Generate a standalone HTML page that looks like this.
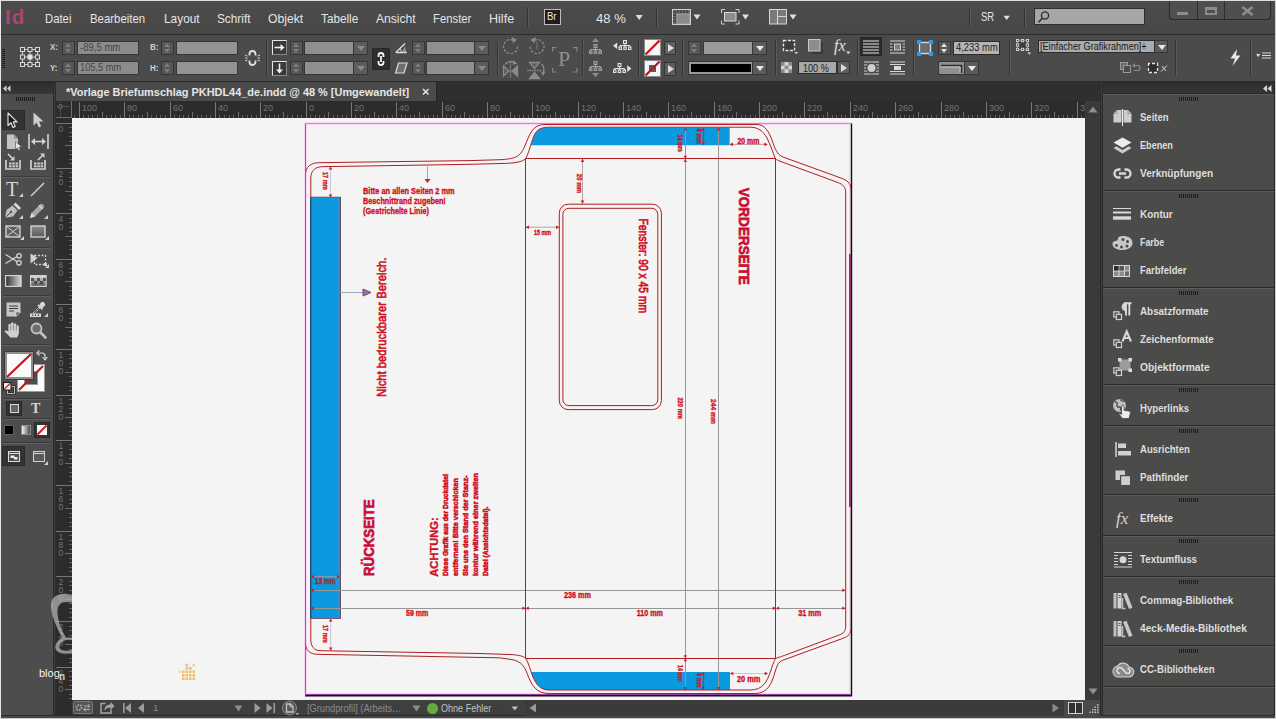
<!DOCTYPE html>
<html lang="de">
<head>
<meta charset="utf-8">
<title>Vorlage Briefumschlag PKHDL44_de.indd @ 48 % [Umgewandelt]</title>
<style>
html,body{margin:0;padding:0;background:#494949;}
body{width:1276px;height:719px;position:relative;overflow:hidden;background:#494949;font-family:"Liberation Sans",sans-serif;color:#ddd;}
.abs,.abs *{position:absolute;}
div{box-sizing:border-box;}
svg{position:absolute;overflow:visible;}
.t{position:absolute;white-space:nowrap;transform-origin:0 0;line-height:1;}
/* window frame */
#frameL{left:0;top:0;width:1px;height:719px;background:#e6e6e6;}
#frameT{left:0;top:0;width:1276px;height:1px;background:#dedede;}
#frameR{left:1275px;top:0;width:1px;height:719px;background:#cfcfcf;}
#frameB{left:0;top:718px;width:1276px;height:1px;background:#c8c8c8;}
/* menubar */
#menubar{left:1px;top:1px;width:1274px;height:33px;background:linear-gradient(#4c4c4c,#474747);}
#menuline{left:1px;top:34px;width:1274px;height:1px;background:#2c2c2c;}
.menu{position:absolute;top:10.5px;font-size:13px;color:#e4e4e4;white-space:nowrap;transform-origin:0 0;line-height:16px;}
.vsep{position:absolute;width:1px;background:#333;box-shadow:1px 0 0 #5a5a5a;}
/* control */
#control{left:1px;top:35px;width:1274px;height:46px;background:#4b4b4b;}
#controlline{left:1px;top:81px;width:1274px;height:1px;background:#2a2a2a;}
.fld{position:absolute;height:14px;background:#8e8e8e;border:1px solid #3a3a3a;border-radius:1px;}
.spin{position:absolute;width:13px;height:14px;background:#5a5a5a;border:1px solid #383838;}
.lbl{position:absolute;font-size:10px;color:#d8d8d8;font-weight:bold;line-height:10px;}
/* tools */
#toolsHead{left:1px;top:82px;width:52px;height:12px;background:linear-gradient(#2b2b2b,#383838);}
#tools{left:1px;top:94px;width:52px;height:622px;background:#4d4d4d;}
#toolsGap{left:53px;top:82px;width:3px;height:634px;background:#2b2b2b;}
.tsep{position:absolute;left:3px;width:47px;height:1px;background:#3a3a3a;box-shadow:0 1px 0 #606060;}
/* doc */
#tabbar{left:56px;top:82px;width:1044px;height:19px;background:#2f2f2f;}
#tab{left:56px;top:82px;width:381px;height:19px;background:#4b4b4b;border-right:1px solid #262626;}
#hruler{left:56px;top:101px;width:1029px;height:17px;background:#2c2c2c;}
#vruler{left:56px;top:118px;width:16px;height:582px;background:#2c2c2c;}
#canvas{left:72px;top:118px;width:1013px;height:582px;background:#f4f4f4;overflow:hidden;}
#vscroll{left:1085px;top:101px;width:15px;height:599px;background:#3a3a39;}
#status{left:56px;top:700px;width:1044px;height:16px;background:#3f3f3f;}
#docGap{left:1100px;top:82px;width:3px;height:634px;background:#2b2b2b;}
/* right panels */
#panHead{left:1103px;top:82px;width:171px;height:12px;background:linear-gradient(#2b2b2b,#383838);}
#panels{left:1103px;top:94px;width:171px;height:622px;background:#4b4b4a;}
#panR{left:1274px;top:82px;width:1px;height:634px;background:#262626;}
#botline{left:1px;top:715px;width:1274px;height:1px;background:#2a2a2a;}
#botfill{left:1px;top:716px;width:1274px;height:2px;background:#484848;}
.grp{position:absolute;left:0;width:171px;border-top:1px solid #2a2a2a;box-shadow:inset 0 1px 0 #5c5c5c;}
.grip{position:absolute;left:76px;top:4px;width:20px;height:4px;background:repeating-linear-gradient(90deg,#1c1c1c 0 1px,transparent 1px 2px);}
.prow{position:absolute;left:37px;font-size:10.5px;font-weight:bold;color:#dedede;white-space:nowrap;transform-origin:0 50%;line-height:12px;}
#ctl .f{height:14px;background:#8c8c8c;border:1px solid #353535;}
#ctl .fa{height:14px;background:#b4b4b4;border:1px solid #2c2c2c;}
#ctl .sp{width:13px;height:14px;background:#565656;border:1px solid #353535;}
#ctl .sp:before{content:"";position:absolute;left:2px;top:1px;border:3.5px solid transparent;border-top:none;border-bottom:4px solid #7d7d7d;}
#ctl .sp:after{content:"";position:absolute;left:2px;top:7px;border:3.5px solid transparent;border-bottom:none;border-top:4px solid #7d7d7d;}
#ctl .spa:before{border-bottom-color:#e0e0e0;}
#ctl .spa:after{border-top-color:#e0e0e0;}
#ctl .dd{width:14px;height:14px;background:#5c5c5c;border:1px solid #353535;border-left:none;}
#ctl .dd:after{content:"";position:absolute;left:2.5px;top:4px;border:4px solid transparent;border-bottom:none;border-top:5px solid #8a8a8a;}
#ctl .dda:after{border-top-color:#e8e8e8;}
#ctl .pb{width:12px;height:14px;background:#5e5e5e;border:1px solid #353535;}
#ctl .pb:after{content:"";position:absolute;left:3px;top:2px;border:4px solid transparent;border-right:none;border-left:6px solid #dcdcdc;}
#ctl .l{font-size:9.5px;font-weight:bold;color:#cfcfcf;line-height:11px;transform:scaleX(.84);transform-origin:0 0;}
#ctl .v{font-size:10.5px;line-height:12px;color:#3c3c3c;white-space:nowrap;transform-origin:0 0;}
#ctl .vs{width:1px;top:5px;height:36px;background:#353535;box-shadow:1px 0 0 #595959;}
</style>
</head>
<body>
<div class="abs" id="frames" style="left:0;top:0;width:1276px;height:719px;">
<div id="menubar"></div><div id="menuline"></div>
<div id="control"></div><div id="controlline"></div>
<div id="toolsHead"></div><div id="tools"></div><div id="toolsGap"></div>
<div id="tabbar"></div><div id="tab"></div>
<div id="hruler"></div><div id="vruler"></div>
<div id="canvas"></div><div id="vscroll"></div><div id="status"></div><div id="docGap"></div>
<div id="gapL" style="left:54px;top:82px;width:1px;height:634px;background:#3e3e3e;"></div><div id="gapR" style="left:1101px;top:82px;width:1px;height:634px;background:#3c3c3c;"></div>
<div id="panHead"></div><div id="panels"></div><div id="panR"></div>
<div id="botline"></div><div id="botfill"></div>
<div id="frameL"></div><div id="frameT"></div><div id="frameR"></div><div id="frameB"></div>
</div>
<div class="abs" id="menuitems" style="left:0;top:0;width:1276px;height:35px;">
<span class="t" id="idlogo" style="transform:scaleX(0.9762);left:5px;top:5.500px;font-size:21px;font-weight:bold;color:#ac4570;letter-spacing:1px;line-height:22px;">Id</span>
<span class="menu" id="m1" style="transform:scaleX(0.8700);left:44.6px;">Datei</span>
<span class="menu" id="m2" style="transform:scaleX(0.8762);left:89.5px;">Bearbeiten</span>
<span class="menu" id="m3" style="transform:scaleX(0.9128);left:164.3px;">Layout</span>
<span class="menu" id="m4" style="transform:scaleX(0.9081);left:217.2px;">Schrift</span>
<span class="menu" id="m5" style="transform:scaleX(0.9368);left:267.8px;">Objekt</span>
<span class="menu" id="m6" style="transform:scaleX(0.9049);left:321.3px;">Tabelle</span>
<span class="menu" id="m7" style="transform:scaleX(0.9302);left:376px;">Ansicht</span>
<span class="menu" id="m8" style="transform:scaleX(0.8705);left:433px;">Fenster</span>
<span class="menu" id="m9" style="transform:scaleX(0.9654);left:489.3px;">Hilfe</span>
<div class="vsep" style="left:527px;top:7px;height:20px;"></div>
<div style="left:544px;top:9px;width:17px;height:16px;background:#1e1e1e;border:1px solid #bdbdbd;"></div>
<span class="t" id="br" style="transform:scaleX(0.9500);left:547px;top:12px;font-size:10px;color:#e8e8e8;line-height:10px;">Br</span>
<span class="menu" id="zoomv" style="transform:scaleX(0.9710);left:595.8px;font-size:13.5px;">48 %</span>
<svg style="left:635px;top:14px;" width="9" height="7"><path d="M0.7 1h7l-3.5 5z" fill="#e0e0e0"/></svg>
<div class="vsep" style="left:656px;top:7px;height:20px;"></div>
<!-- view options icon -->
<svg style="left:672px;top:9px;" width="30" height="17">
 <rect x="0.5" y="0.5" width="18" height="15" fill="#6a6a6a" stroke="#d0d0d0"/>
 <rect x="5" y="5" width="13" height="10" fill="#8a8a8a" stroke="#bdbdbd" stroke-width=".6"/>
 <path d="M1 3h3M1 6h3M1 9h3M1 12h3M6 1v3M9 1v3M12 1v3M15 1v3" stroke="#2b2b2b" stroke-width="1"/>
 <path d="M21.5 5.5h7l-3.5 5z" fill="#e0e0e0"/>
</svg>
<!-- screen mode icon -->
<svg style="left:721px;top:9px;" width="30" height="17">
 <path d="M0.5 4V0.5H4M14.5 0.5H18V4M18 11.5V15H14.5M4 15H0.5V11.5" fill="none" stroke="#d0d0d0"/>
 <rect x="3.5" y="3.5" width="11.5" height="8.5" fill="#8d8d8d" stroke="#d6d6d6"/>
 <path d="M21 5.5h7l-3.5 5z" fill="#e0e0e0"/>
</svg>
<!-- arrange icon -->
<svg style="left:769px;top:9px;" width="30" height="17">
 <rect x="0.5" y="0.5" width="17" height="14.5" fill="#7a7a7a" stroke="#d6d6d6"/>
 <path d="M8.5 0.5V15M8.5 7.5H17.5" stroke="#d6d6d6" fill="none"/>
 <path d="M20.5 5.5h7l-3.5 5z" fill="#e0e0e0"/>
</svg>
<div class="vsep" style="left:969px;top:7px;height:20px;"></div>
<span class="menu" id="sr" style="transform:scaleX(0.7222);left:981px;top:8.500px;font-size:13px;">SR</span>
<svg style="left:1003px;top:15px;" width="8" height="6"><path d="M0.5 0.8h6.4l-3.2 4.2z" fill="#e0e0e0"/></svg>
<div class="vsep" style="left:1024px;top:7px;height:20px;"></div>
<div id="search" style="left:1034px;top:8px;width:111px;height:17px;background:#a6a6a6;border:1px solid #2e2e2e;"></div>
<svg style="left:1037px;top:10px;" width="14" height="14"><circle cx="8" cy="5.5" r="3.6" fill="none" stroke="#2a2a2a" stroke-width="1.3"/><path d="M5.4 8.2L1.5 12.3" stroke="#2a2a2a" stroke-width="1.6"/></svg>
<!-- window buttons -->
<div id="winbtns" style="left:1169px;top:1px;width:102px;height:19px;background:#4f4f4f;border:1px solid #2a2a2a;border-top:none;border-radius:0 0 4px 4px;"></div>
<div style="left:1197px;top:1px;width:1px;height:18px;background:#2e2e2e;"></div>
<div style="left:1224px;top:1px;width:1px;height:18px;background:#2e2e2e;"></div>
<div style="left:1177px;top:12px;width:11px;height:3px;background:#8c8c8c;"></div>
<div style="left:1205px;top:7px;width:12px;height:8px;border:2px solid #8c8c8c;border-top-width:3px;"></div>
<svg style="left:1241px;top:6px;" width="13" height="10"><path d="M1.5 1L11.5 9M11.5 1L1.5 9" stroke="#8c8c8c" stroke-width="2.6"/></svg>
</div>
<div class="abs" id="ctl" style="left:0;top:35px;width:1276px;height:46px;">

<!-- gripper -->
<div style="left:2px;top:13px;width:3px;height:20px;background:repeating-linear-gradient(0deg,#1c1c1c 0 1px,transparent 1px 2px);"></div>
<!-- reference point -->
<svg style="left:20px;top:12px;" width="20" height="20" id="refpt">
 <path d="M2.5 2.5h15v15h-15zM2.5 10h15M10 2.5v15" fill="none" stroke="#cfcfcf" stroke-width="1"/>
 <g fill="#4b4b4b" stroke="#dadada" stroke-width="1">
 <rect x="0.5" y="0.5" width="4" height="4"/><rect x="8" y="0.5" width="4" height="4"/><rect x="15.5" y="0.5" width="4" height="4"/>
 <rect x="0.5" y="8" width="4" height="4"/><rect x="15.5" y="8" width="4" height="4"/>
 <rect x="0.5" y="15.5" width="4" height="4"/><rect x="8" y="15.5" width="4" height="4"/><rect x="15.5" y="15.5" width="4" height="4"/>
 </g>
 <rect x="7.5" y="7.5" width="5" height="5" fill="#e4e4e4"/>
</svg>
<span class="l" style="left:50px;top:6px;">X:</span>
<span class="l" style="left:50px;top:27px;">Y:</span>
<div class="sp" style="left:62px;top:6px;"></div><div class="sp" style="left:62px;top:26px;"></div>
<div class="f" style="left:77px;top:6px;width:62px;"></div><div class="f" style="left:77px;top:26px;width:62px;"></div>
<span class="v" id="vx" style="transform:scaleX(0.9091);left:80px;top:5.500px;color:#454545;">-89,5 mm</span>
<span class="v" id="vy" style="transform:scaleX(0.8851);left:80px;top:25.500px;color:#454545;">105,5 mm</span>
<span class="l" style="left:150px;top:6px;">B:</span>
<span class="l" style="left:150px;top:27px;">H:</span>
<div class="sp" style="left:161px;top:6px;"></div><div class="sp" style="left:161px;top:26px;"></div>
<div class="f" style="left:176px;top:6px;width:62px;background:#939393;"></div><div class="f" style="left:176px;top:26px;width:62px;background:#939393;"></div>
<!-- constrain chain (broken) -->
<svg style="left:244px;top:14px;" width="17" height="18" id="chain1">
 <path d="M5.5 6.5V5a3 3 0 0 1 6 0v1.5M5.5 11.5V13a3 3 0 0 0 6 0v-1.5" fill="none" stroke="#e2e2e2" stroke-width="1.8"/>
 <path d="M1 6l2.5 1M1 9h2.5M1 12l2.5-1M16 6l-2.5 1M16 9h-2.5M16 12l-2.5-1" stroke="#d0d0d0" stroke-width="1"/>
</svg>
<div class="vs" style="left:266px;"></div>
<!-- X/Y scale icons -->
<svg style="left:272px;top:5px;" width="15" height="15"><rect x="0.5" y="0.5" width="14" height="14" fill="#3a3a3a" stroke="#cfcfcf" stroke-dasharray="1 1"/><path d="M0.5 0.5h14M0.5 0.5v14" stroke="#e6e6e6" fill="none"/><path d="M2.5 7.5h8" stroke="#f0f0f0" stroke-width="1.6"/><path d="M8.5 4l4 3.5-4 3.5z" fill="#f0f0f0"/></svg>
<svg style="left:272px;top:26px;" width="15" height="15"><rect x="0.5" y="0.5" width="14" height="14" fill="#3a3a3a" stroke="#cfcfcf" stroke-dasharray="1 1"/><path d="M0.5 0.5h14M0.5 0.5v14" stroke="#e6e6e6" fill="none"/><path d="M7.5 2.5v8" stroke="#f0f0f0" stroke-width="1.6"/><path d="M4 8.5l3.5 4 3.5-4z" fill="#f0f0f0"/></svg>
<div class="sp" style="left:290px;top:6px;"></div><div class="sp" style="left:290px;top:26px;"></div>
<div class="f" style="left:304px;top:6px;width:50px;background:#8f8f8f;"></div><div class="dd" style="left:354px;top:6px;"></div>
<div class="f" style="left:304px;top:26px;width:50px;background:#8f8f8f;"></div><div class="dd" style="left:354px;top:26px;"></div>
<!-- chain button -->
<div style="left:372px;top:13px;width:18px;height:22px;background:#2d2d2d;border:1px solid #262626;border-radius:1px;"></div>
<svg style="left:375px;top:16px;" width="12" height="16"><path d="M3.5 6V4.5a2.5 2.5 0 0 1 5 0V6M3.5 10v1.5a2.5 2.5 0 0 0 5 0V10M6 5v6" fill="none" stroke="#f2f2f2" stroke-width="1.8"/></svg>
<!-- rotate / shear icons -->
<svg style="left:395px;top:7px;" width="13" height="12"><path d="M0.8 10.5h11M0.8 10.5L10 1.5" fill="none" stroke="#dcdcdc" stroke-width="1.3"/><path d="M6.5 10.5a6 6 0 0 0-1.8-4" fill="none" stroke="#dcdcdc" stroke-width="1"/><path d="M7 10.5L9.8 4l1.6 6.5z" fill="#cfcfcf" opacity=".55"/></svg>
<svg style="left:395px;top:27px;" width="13" height="12"><path d="M3.5 1h8.5L9 11H0.6z" fill="#6e6e6e" stroke="#dcdcdc" stroke-width="1.2"/></svg>
<div class="sp" style="left:412px;top:6px;"></div><div class="sp" style="left:412px;top:26px;"></div>
<div class="f" style="left:426px;top:6px;width:49px;background:#8f8f8f;"></div><div class="dd" style="left:475px;top:6px;"></div>
<div class="f" style="left:426px;top:26px;width:49px;background:#8f8f8f;"></div><div class="dd" style="left:475px;top:26px;"></div>
<div class="vs" style="left:497px;"></div>
<!-- rotate cw/ccw, flip icons (dimmed) -->
<svg style="left:502px;top:1px;" width="46" height="44" id="roticons" fill="none" stroke="#8a8a8a" stroke-width="1.300"><path d="M15.500 10.500a7 7 0 1 1-3.500-6" stroke-dasharray="2.600 1.500"/><path d="M9.500 1l5.500 2.800-4 3.400z" fill="#8a8a8a" stroke="none"/><path d="M28 10.500a7 7 0 1 0 3.500-6" stroke-dasharray="2.600 1.500"/><path d="M34 1l-5.500 2.800 4 3.400z" fill="#8a8a8a" stroke="none"/><path d="M35 5.500v8" stroke-width="1" stroke="#767676"/><path d="M8.500 26v16" stroke-dasharray="1.200 1.200" stroke="#a0a0a0"/><path d="M1.500 30v10l5.500-5z" fill="#5e5e5e"/><path d="M15.500 30v10l-5.500-5z" fill="#8a8a8a"/><path d="M3 28.500a7.500 7.500 0 0 1 10.500-1.500"/><path d="M11.500 24.500l4 3.200-4.800 1z" fill="#8a8a8a" stroke="none"/><path d="M25.500 34.500h14" stroke-dasharray="1.200 1.200" stroke="#a0a0a0"/><path d="M27.500 26.500h10l-5 6z" fill="#5e5e5e"/><path d="M27.500 42.500h10l-5-6z" fill="#8a8a8a"/><path d="M39.500 28a8 8 0 0 1 1.500 9"/><path d="M43.500 35.500l-2.500 4.500-2-4.200z" fill="#8a8a8a" stroke="none"/></svg>
<svg style="left:552px;top:12px;" width="26" height="26" fill="none" stroke="#868686" stroke-width="1.200"><path d="M0.600 4.500V0.600H4.500M21 0.600H25V4.500M25 21V25H21M4.500 25H0.600V21"/></svg>
<span class="t" id="bigP" style="left:558px;top:11.500px;font-family:'Liberation Serif',serif;font-size:22px;color:#8e8e8e;line-height:24px;">P</span>
<div class="vs" style="left:582px;"></div>
<!-- select container/content icons -->
<svg style="left:588px;top:0px;" width="46" height="46" id="hier" stroke-width="1"><g stroke="#a2a2a2" fill="#6a6a6a"><g transform="translate(1 9)"><path d="M6.500 3.500v2M1.500 7V5.500h10V7M6.500 5.500V7" fill="none"/><rect x="5" y="0.500" width="3" height="3"/><rect x="0.500" y="7" width="2.500" height="2.500"/><rect x="5.250" y="7" width="2.500" height="2.500"/><rect x="10" y="7" width="2.500" height="2.500"/></g><g transform="translate(1 26)"><path d="M6.500 3.500v2M1.500 7V5.500h10V7M6.500 5.500V7" fill="none"/><rect x="5" y="0.500" width="3" height="3"/><rect x="0.500" y="7" width="2.500" height="2.500"/><rect x="5.250" y="7" width="2.500" height="2.500"/><rect x="10" y="7" width="2.500" height="2.500"/></g></g><path d="M4 7h7l-3.500-4zM4 38h7l-3.500 4z" fill="#8e8e8e"/><g stroke="#e2e2e2" fill="#6a6a6a"><g transform="translate(30.500 5)"><path d="M6.500 3.500v2M1.500 7V5.500h10V7M6.500 5.500V7" fill="none"/><rect x="5" y="0.500" width="3" height="3"/><rect x="0.500" y="7" width="2.500" height="2.500"/><rect x="5.250" y="7" width="2.500" height="2.500"/><rect x="10" y="7" width="2.500" height="2.500"/></g><g transform="translate(25 28)"><path d="M6.500 3.500v2M1.500 7V5.500h10V7M6.500 5.500V7" fill="none"/><rect x="5" y="0.500" width="3" height="3"/><rect x="0.500" y="7" width="2.500" height="2.500"/><rect x="5.250" y="7" width="2.500" height="2.500"/><rect x="10" y="7" width="2.500" height="2.500"/></g></g><path d="M29.200 7.500v6.500l-4.200-3.250zM39.200 30.200v6.700l4.200-3.350z" fill="#e2e2e2"/></svg>
<div class="vs" style="left:638px;"></div>
<!-- fill / stroke -->
<div style="left:644px;top:4px;width:17px;height:17px;background:#f6f6f6;border:1px solid #8a8a8a;"></div>
<svg style="left:644px;top:4px;" width="17" height="17"><path d="M1.5 15.500L15.500 1.500" stroke="#c8141a" stroke-width="2.300"/></svg>
<div class="pb" style="left:664px;top:6px;"></div>
<div style="left:644px;top:25px;width:17px;height:17px;background:#f6f6f6;border:1px solid #8a8a8a;"></div>
<div style="left:649px;top:30px;width:7px;height:7px;background:#5a5a5a;"></div>
<svg style="left:644px;top:25px;" width="17" height="17"><path d="M1.500 15.500L15.500 1.500" stroke="#c8141a" stroke-width="2.300"/></svg>
<div class="pb" style="left:664px;top:27px;"></div>
<div class="vs" style="left:682px;"></div>
<div class="sp" style="left:688px;top:6px;"></div>
<div class="f" style="left:703px;top:6px;width:50px;background:#9a9a9a;"></div><div class="dd dda" style="left:753px;top:6px;"></div>
<div class="f" style="left:688px;top:26px;width:65px;background:#9a9a9a;"></div><div style="left:691px;top:29px;width:60px;height:8px;background:#000;"></div><div class="dd dda" style="left:753px;top:26px;"></div>
<div class="vs" style="left:775px;"></div>
<!-- frame fitting icons -->
<svg style="left:782px;top:4px;" width="16" height="16"><rect x="1.500" y="1.500" width="11" height="10" fill="#3c3c3c" stroke="#e0e0e0" stroke-width="1.400" stroke-dasharray="3 1.500"/><path d="M12.500 13h3.500l-1.750 2.200z" fill="#d8d8d8"/></svg>
<svg style="left:808px;top:4px;" width="16" height="16"><rect x="3" y="3" width="12" height="12" fill="#3a3a3a"/><rect x="0.500" y="0.500" width="11.500" height="11.500" fill="#8c8c8c" stroke="#c8c8c8"/></svg>
<span class="t" id="fx1" style="left:834px;top:3px;font-family:'Liberation Serif',serif;font-style:italic;font-size:16px;color:#e2e2e2;line-height:16px;">fx</span>
<svg style="left:846px;top:16px;" width="5" height="4"><path d="M0 0.500h4.500l-2.250 2.800z" fill="#d8d8d8"/></svg>
<!-- opacity -->
<svg style="left:781px;top:27px;" width="11" height="11"><rect width="11" height="11" fill="#d6d6d6"/><path d="M0 0h3.670v3.670H0zM7.330 0H11v3.670H7.330zM3.670 3.670h3.660v3.660H3.670zM0 7.330h3.670V11H0zM7.330 7.330H11V11H7.330z" fill="#8a8a8a"/></svg>
<div class="fa" style="left:798px;top:26px;width:39px;height:13px;background:#a8a8a8;"></div>
<span class="v" id="op" style="transform:scaleX(0.8667);left:803px;top:27px;color:#222;">100 %</span>
<div class="pb" style="left:837px;top:26px;height:13px;width:13px;"></div>
<div class="vs" style="left:857px;"></div>
<!-- text wrap buttons -->
<div style="left:860px;top:2px;width:22px;height:19px;background:#2e2e2e;border:1px solid #262626;"></div>
<svg style="left:863px;top:5px;" width="16" height="14"><path d="M0 1h16M0 4h16M0 7h16M0 10h16M0 13h16" stroke="#e4e4e4" stroke-width="1.200"/></svg>
<svg style="left:890px;top:5px;" width="15" height="14"><path d="M0 1h15M0 4h15M0 7h15M0 10h15M0 13h15" stroke="#d8d8d8" stroke-width="1.100"/><rect x="2.500" y="2.500" width="10" height="9" fill="#4b4b4b"/><rect x="4.500" y="4" width="6" height="6" fill="#7e7e7e" stroke="#d8d8d8" stroke-width=".9"/></svg>
<svg style="left:864px;top:26px;" width="15" height="14"><path d="M0 1h15M0 4h15M0 7h15M0 10h15M0 13h15" stroke="#d8d8d8" stroke-width="1.100"/><circle cx="7.500" cy="7" r="5.500" fill="#4b4b4b"/><circle cx="7.500" cy="7" r="4" fill="#cfcfcf"/></svg>
<svg style="left:890px;top:26px;" width="15" height="14"><path d="M0 1h15M0 3.500h15M0 10.500h15M0 13h15" stroke="#d8d8d8" stroke-width="1.100"/><rect x="4" y="5" width="7" height="4" fill="#d8d8d8"/></svg>
<div class="vs" style="left:913px;"></div>
<!-- corner options -->
<svg style="left:917px;top:5px;" width="16" height="16"><rect x="2.500" y="2.500" width="11" height="11" fill="#6a6a6a" stroke="#d8d8d8" stroke-width="1.400"/><g fill="#2f9be8"><rect x="0" y="0" width="4" height="4"/><rect x="12" y="0" width="4" height="4"/><rect x="0" y="12" width="4" height="4"/><rect x="12" y="12" width="4" height="4"/></g></svg>
<div class="sp spa" style="left:938px;top:6px;"></div>
<div class="fa" style="left:953px;top:6px;width:47px;"></div>
<span class="v" id="cr" style="transform:scaleX(0.8936);left:956px;top:6px;color:#1e1e1e;">4,233 mm</span>
<div class="f" style="left:938px;top:26px;width:27px;background:#8f8f8f;"></div>
<svg style="left:940px;top:28px;" width="23" height="10"><path d="M1 2.500h20.500V10" fill="none" stroke="#2c2c2c" stroke-width="1.600"/><path d="M1 4h19v6" fill="none" stroke="#c9c9c9" stroke-width="1"/></svg>
<div class="dd dda" style="left:965px;top:26px;"></div>
<div class="vs" style="left:1009px;"></div>
<!-- object style -->
<svg style="left:1016px;top:4px;" width="16" height="16"><rect x="1.500" y="1.500" width="10" height="9" fill="#3c3c3c" stroke="#bdbdbd" stroke-width="1" stroke-dasharray="1 1"/><g fill="#4b4b4b" stroke="#e0e0e0" stroke-width=".8"><rect x="0.400" y="0.400" width="2.400" height="2.400"/><rect x="5.300" y="0.400" width="2.400" height="2.400"/><rect x="10.200" y="0.400" width="2.400" height="2.400"/><rect x="0.400" y="4.800" width="2.400" height="2.400"/><rect x="10.200" y="4.800" width="2.400" height="2.400"/><rect x="0.400" y="9.200" width="2.400" height="2.400"/><rect x="5.300" y="9.200" width="2.400" height="2.400"/><rect x="10.200" y="9.200" width="2.400" height="2.400"/></g><path d="M11.500 13.500H15l-1.750 2.200z" fill="#d8d8d8"/></svg>
<div class="fa" style="left:1038px;top:5px;width:117px;height:13px;background:#ababab;"></div>
<span class="v" id="os" style="transform:scaleX(0.7926);left:1040px;top:4.500px;color:#1a1a1a;font-size:11.500px;">[Einfacher Grafikrahmen]+</span>
<div class="dd dda" style="left:1155px;top:5px;height:13px;width:13px;"></div>
<svg style="left:1120px;top:27px;" width="48" height="13" fill="none">
 <rect x="0.500" y="0.500" width="7" height="7" fill="#6a6a6a" stroke="#9a9a9a"/><rect x="3.500" y="3.500" width="7" height="7" fill="#4b4b4b" stroke="#9a9a9a"/>
 <path d="M13.500 8.500h4a2.500 2.500 0 0 0 0-5h-4.500" stroke="#8a8a8a" stroke-width="1.200"/><path d="M15 1l-3 2.500 3 2.500z" fill="#8a8a8a"/>
 <rect x="28.500" y="1.500" width="9" height="9" fill="#2c2c2c" stroke="#e6e6e6" stroke-width="1.300" stroke-dasharray="3 2" stroke-dashoffset="1.500"/>
 <path d="M41 9.500l6-6M42 4l4 5" stroke="#d8d8d8" stroke-width="1"/>
</svg>
<div class="vs" style="left:1175px;"></div>
<svg style="left:1229px;top:14px;" width="13" height="18"><path d="M8 0L1.500 9.500h4.500L3.500 17 11.500 6.500H7z" fill="#e8e8e8"/></svg>
<div class="vs" style="left:1250px;"></div>
<svg style="left:1256px;top:17px;" width="15" height="8"><path d="M0 2h4.500L2.250 5z" fill="#dcdcdc"/><path d="M6 1h9M6 3.500h9M6 6h9" stroke="#dcdcdc" stroke-width="1.100"/></svg>
</div>
<div class="abs" id="tl" style="left:0;top:82px;width:56px;height:634px;">
<svg style="left:2.500px;top:3px;" width="8" height="7"><path d="M3.500 0.300v6.400L0 3.500zM7.500 0.300v6.400L4 3.500z" fill="#cdcdcd"/></svg>
<div style="left:16px;top:15px;width:20px;height:4px;background:repeating-linear-gradient(90deg,#1c1c1c 0 1px,transparent 1px 2px);"></div>
<!-- selected selection tool -->
<div style="left:2px;top:28px;width:23px;height:20px;background:#333;border:1px solid #2a2a2a;"></div>
<svg style="left:7px;top:30px;" width="12" height="17"><path d="M1 1v12.500l3-2.800 2 4.800 2.200-1-2-4.600H10z" fill="#1a1a1a" stroke="#e8e8e8" stroke-width="1.100" stroke-linejoin="round"/></svg>
<svg style="left:33px;top:30px;" width="12" height="17"><path d="M0.500 0.500v13l3.200-3 2.100 5 2.300-1-2.100-4.900H10.500z" fill="#cfcfcf"/></svg>
<!-- page tool -->
<svg style="left:6px;top:52px;" width="16" height="16"><path d="M1 0.500h7l4 4V15H1z" fill="#c4c4c4"/><path d="M8 0.500v4h4z" fill="#8c8c8c"/><path d="M9.500 7.500v8l2-1.800 1.300 3 1.500-.7-1.300-2.900h2.800z" fill="#e8e8e8" stroke="#4d4d4d" stroke-width=".6"/></svg>
<!-- gap tool -->
<svg style="left:28px;top:52px;" width="21" height="15"><path d="M1 0v15M20 0v15" stroke="#d2d2d2" stroke-width="1.600"/><path d="M5 7.500h11" stroke="#d2d2d2" stroke-width="1.600"/><path d="M3 7.500l4-3.500v7zM18 7.500l-4-3.500v7z" fill="#d2d2d2"/></svg>
<!-- content collector / placer -->
<svg style="left:5px;top:71px;" width="17" height="17"><path d="M1 7v9h14V7" fill="none" stroke="#cfcfcf" stroke-width="1.700"/><g fill="#cfcfcf"><rect x="4" y="9.500" width="2.500" height="2"/><rect x="7.300" y="9.500" width="2.500" height="2"/><rect x="10.600" y="9.500" width="2.500" height="2"/><rect x="4" y="12.300" width="2.500" height="2"/><rect x="7.300" y="12.300" width="2.500" height="2"/><rect x="10.600" y="12.300" width="2.500" height="2"/></g><path d="M3 1l5 5" stroke="#cfcfcf" stroke-width="1.700"/><path d="M9.500 3v4.500H5z" fill="#cfcfcf"/></svg>
<svg style="left:30px;top:71px;" width="17" height="17"><path d="M1 7v9h14V7" fill="none" stroke="#cfcfcf" stroke-width="1.700"/><g fill="#cfcfcf"><rect x="4" y="9.500" width="2.500" height="2"/><rect x="7.300" y="9.500" width="2.500" height="2"/><rect x="10.600" y="9.500" width="2.500" height="2"/><rect x="4" y="12.300" width="2.500" height="2"/><rect x="7.300" y="12.300" width="2.500" height="2"/><rect x="10.600" y="12.300" width="2.500" height="2"/></g><path d="M8 7l5-5" stroke="#cfcfcf" stroke-width="1.700"/><path d="M10 0.500h4.500V5z" fill="#cfcfcf"/></svg>
<div class="tsep" style="top:94px;"></div>
<!-- type, line -->
<span class="t" style="left:6px;top:97px;font-family:'Liberation Serif',serif;font-size:20px;line-height:20px;color:#d6d6d6;">T</span>
<svg style="left:19px;top:111px;" width="4" height="4"><path d="M4 0v4H0z" fill="#d0d0d0"/></svg>
<svg style="left:30px;top:100px;" width="15" height="15"><path d="M1 14L14 1" stroke="#d0d0d0" stroke-width="1.500"/></svg>
<!-- pen, pencil -->
<svg style="left:4px;top:120px;" width="19" height="17"><path d="M1 16l1.500-8 6-4.500 5 5-4.500 6z" fill="#bdbdbd"/><path d="M1 16l5.500-5.500" stroke="#4d4d4d" stroke-width="1"/><circle cx="7" cy="10" r="1.200" fill="#4d4d4d"/><path d="M9.500 2.500l2-2 5.500 5.500-2 2z" fill="#d8d8d8"/><path d="M19 13v4h-4z" fill="#d0d0d0"/></svg>
<svg style="left:29px;top:121px;" width="19" height="16"><path d="M1 15l1.500-5L11 1.500a2 2 0 0 1 3 0l.5.500a2 2 0 0 1 0 3L6 13.500z" fill="#a8a8a8"/><path d="M1 15l1.500-5 3.500 3.500z" fill="#e0e0e0"/><path d="M10 2.500l3.500 3.500" stroke="#e0e0e0" stroke-width="1.200"/><path d="M19 12v4h-4z" fill="#d0d0d0"/></svg>
<!-- rect frame, rect -->
<svg style="left:5px;top:143px;" width="19" height="15"><rect x="1" y="1" width="14" height="11" fill="#5e5e5e" stroke="#d2d2d2" stroke-width="1.400"/><path d="M1 1l14 11M15 1L1 12" stroke="#d2d2d2" stroke-width="1"/><path d="M19 11v4h-4z" fill="#d0d0d0"/></svg>
<svg style="left:30px;top:143px;" width="19" height="15"><defs><linearGradient id="gr1" x1="0" y1="0" x2="0" y2="1"><stop offset="0" stop-color="#8c8c8c"/><stop offset="1" stop-color="#5a5a5a"/></linearGradient></defs><rect x="1" y="1" width="14" height="11" fill="url(#gr1)" stroke="#d2d2d2" stroke-width="1.400"/><path d="M19 11v4h-4z" fill="#d0d0d0"/></svg>
<div class="tsep" style="top:165px;"></div>
<!-- scissors, free transform -->
<svg style="left:5px;top:171px;" width="18" height="13" fill="none" stroke="#d2d2d2" stroke-width="1.300"><path d="M0.500 1.500L12 8.500M0.500 10.500L12 3.500"/><circle cx="14" cy="2.800" r="2.200"/><circle cx="14" cy="9.800" r="2.200"/></svg>
<svg style="left:30px;top:171px;" width="19" height="15"><rect x="4.500" y="2.500" width="11" height="9" fill="none" stroke="#d2d2d2" stroke-width="1.300" stroke-dasharray="2 1.500"/><path d="M0.500 0.500v10l7-5.500z" fill="#d2d2d2"/><rect x="14" y="10" width="3" height="3" fill="#d2d2d2"/><path d="M19 11v4h-4z" fill="#d0d0d0"/></svg>
<!-- gradient, gradient feather -->
<svg style="left:5px;top:193px;" width="17" height="12"><defs><linearGradient id="gr2"><stop offset="0" stop-color="#2e2e2e"/><stop offset="1" stop-color="#d8d8d8"/></linearGradient></defs><rect x="0.600" y="0.600" width="15.500" height="10.800" fill="url(#gr2)" stroke="#d2d2d2" stroke-width="1.200"/></svg>
<svg style="left:30px;top:193px;" width="17" height="12"><defs><linearGradient id="gr3" x1="0" y1="0" x2="0" y2="1"><stop offset="0" stop-color="#e0e0e0"/><stop offset="1" stop-color="#555"/></linearGradient></defs><rect x="0.600" y="0.600" width="15.500" height="10.800" fill="url(#gr3)" stroke="#d2d2d2" stroke-width="1.200"/><path d="M1 3h3v3H1zM7 3h3v3H7zM13 3h3v3h-3zM4 6h3v3H4zM10 6h3v3h-3z" fill="#3c3c3c" opacity=".8"/></svg>
<div class="tsep" style="top:213px;"></div>
<!-- note, eyedropper -->
<svg style="left:6px;top:220px;" width="15" height="15"><path d="M0.500 0.500h14v9.500l-4.500 4.500h-9.500z" fill="#c6c6c6"/><path d="M10 14.500v-4.500h4.500z" fill="#4d4d4d" stroke="#e0e0e0" stroke-width=".8"/><path d="M3 4h9M3 6.500h9M3 9h5" stroke="#3c3c3c" stroke-width="1.200"/></svg>
<svg style="left:29px;top:219px;" width="20" height="17"><path d="M12 1.500a2 2 0 0 1 3 0l.5.500a2 2 0 0 1 0 3L13 7.500 10 4.500z" fill="#d8d8d8"/><path d="M9 4l4.500 4.500" stroke="#d8d8d8" stroke-width="1.600"/><path d="M10 6l-6.500 6.500L3 14l1.500-.5L11 7z" fill="none" stroke="#d8d8d8" stroke-width="1" stroke-dasharray="1.500 1"/><rect x="1" y="12.500" width="11" height="3.500" fill="#d8d8d8"/><path d="M3.500 13.500v1.500M6.500 13.500v1.500M9.500 13.500v1.500" stroke="#4d4d4d" stroke-width="1.300"/><path d="M19 12v4h-4z" fill="#d0d0d0"/></svg>
<!-- hand, zoom -->
<svg style="left:4px;top:240px;" width="19" height="16"><g transform="scale(1.25 1)"><path d="M5 15.500c-1-2-3.500-4.500-4.500-6 0-1.500 1.500-1.500 3 0V3c0-1.300 2-1.300 2 0V1.500c0-1.300 2.200-1.300 2.200 0V2.500c0-1.300 2.200-1.300 2.200 0v2c0-1.300 2-1.300 2 0v5.500c0 2-.5 3.500-1.500 5.500z" fill="#d0d0d0"/><path d="M5.500 3.500v5M7.700 2.500v6M9.900 3.500v5" stroke="#6a6a6a" stroke-width=".6"/></g></svg>
<svg style="left:30px;top:240px;" width="17" height="16"><circle cx="6.500" cy="6.500" r="5" fill="#6e6e6e" stroke="#c2c2c2" stroke-width="1.800"/><path d="M10.500 10.500l5 5" stroke="#c2c2c2" stroke-width="2.600" stroke-linecap="round"/></svg>
<div class="tsep" style="top:262px;"></div>
<!-- fill/stroke swatches -->
<div style="left:17px;top:282px;width:28px;height:28px;background:#fafafa;border:1px solid #9a9a9a;"></div>
<div style="left:24px;top:289px;width:14px;height:14px;background:#4d4d4d;border:1px solid #9a9a9a;"></div>
<svg style="left:17px;top:282px;" width="28" height="28"><path d="M2 26L26 2" stroke="#c4161c" stroke-width="2.200"/></svg>
<div style="left:5px;top:270px;width:28px;height:27px;background:#fafafa;border:2px solid #8e8e8e;box-shadow:0 0 0 1px #3c3c3c;"></div>
<svg style="left:5px;top:270px;" width="28" height="27"><path d="M2 25L26 2" stroke="#c4161c" stroke-width="2.200"/></svg>
<svg style="left:36px;top:268px;" width="11" height="11" fill="none" stroke="#d8d8d8" stroke-width="1.200"><path d="M2 3h4a3 3 0 0 1 3 3v3"/><path d="M3.500 0.500L0.800 3l2.700 2.500M6.500 7L9 9.800 11.500 7" stroke-width="1.100"/></svg>
<svg style="left:3px;top:300px;" width="13" height="13"><rect x="4.500" y="4.500" width="7" height="7" fill="#4d4d4d" stroke="#1a1a1a" stroke-width="2"/><rect x="4.500" y="4.500" width="7" height="7" fill="none" stroke="#e0e0e0" stroke-width=".8"/><rect x="0.500" y="0.500" width="7.500" height="7.500" fill="#f0f0f0" stroke="#1a1a1a"/><path d="M1 7.500L7.500 1" stroke="#cf1820" stroke-width="1.300"/></svg>
<div class="tsep" style="top:316px;"></div>
<!-- formatting affects -->
<div style="left:6px;top:319px;width:16px;height:15px;background:#333;border:1px solid #2a2a2a;"></div>
<div style="left:10px;top:322px;width:9px;height:9px;background:#666;border:1px solid #d8d8d8;"></div>
<span class="t" style="left:31px;top:320px;font-family:'Liberation Serif',serif;font-weight:bold;font-size:14px;line-height:14px;color:#d6d6d6;">T</span>
<div class="tsep" style="top:336px;"></div>
<!-- apply color/gradient/none -->
<div style="left:4px;top:343px;width:10px;height:10px;background:#000;border:1px solid #5e5e5e;"></div>
<div style="left:21px;top:343px;width:10px;height:10px;background:linear-gradient(90deg,#f4f4f4,#4a4a4a);border:1px solid #8a8a8a;"></div>
<div style="left:34px;top:340px;width:16px;height:16px;background:#333;border:1px solid #2a2a2a;"></div>
<div style="left:37px;top:343px;width:10px;height:10px;background:#f6f6f6;"></div>
<svg style="left:37px;top:343px;" width="10" height="10"><path d="M0.500 9.500l9-9" stroke="#cf1820" stroke-width="1.800"/></svg>
<div class="tsep" style="top:360px;"></div>
<!-- view modes -->
<div style="left:2px;top:364px;width:23px;height:20px;background:#333;border:1px solid #2a2a2a;"></div>
<svg style="left:8px;top:369px;" width="12" height="11"><rect x="0.500" y="0.500" width="11" height="10" fill="#4d4d4d" stroke="#dadada"/><path d="M0.500 2.500h11" stroke="#dadada"/><path d="M2.500 4.500h4v2.500h-4zM6 6h3.500v2.500H6z" fill="#f0f0f0"/></svg>
<svg style="left:33px;top:369px;" width="16" height="15"><rect x="0.500" y="0.500" width="11" height="10" fill="#5a5a5a" stroke="#cfcfcf"/><path d="M0.500 2.500h11" stroke="#cfcfcf"/><path d="M15 10v4h-4z" fill="#d0d0d0"/></svg>
<!-- watermark -->
<span class="t" id="blog" style="left:39px;top:585px;font-size:11px;line-height:12px;color:#f2f2f2;">blog</span>
</div>
<div class="abs" id="docui" style="left:0;top:0;width:1276px;height:719px;">
<span class="t" id="tabtitle" style="transform:scaleX(0.9501);left:66px;top:86.3px;font-size:11.5px;font-weight:bold;color:#e6e6e6;line-height:13px;">*Vorlage Briefumschlag PKHDL44_de.indd @ 48 % [Umgewandelt]</span>
<svg style="left:422px;top:88px;" width="8" height="8"><path d="M1 1l5.500 5.500M6.500 1L1 6.500" stroke="#e4e4e4" stroke-width="1.500"/></svg>
<svg style="left:56px;top:101px;overflow:hidden;" width="1029" height="17" id="hr">
<path d="M23.5 1v16M68.5 1v16M114.5 1v16M159.5 1v16M204.5 1v16M250.5 1v16M295.5 1v16M340.5 1v16M386.5 1v16M431.5 1v16M476.5 1v16M522.5 1v16M567.5 1v16M612.5 1v16M658.5 1v16M703.5 1v16M748.5 1v16M794.5 1v16M839.5 1v16M885.5 1v16M930.5 1v16M975.5 1v16M1021.5 1v16" stroke="#787878" stroke-width="1" fill="none"/>
<path d="M46.5 11v6M91.5 11v6M136.5 11v6M182.5 11v6M227.5 11v6M272.5 11v6M318.5 11v6M363.5 11v6M408.5 11v6M454.5 11v6M499.5 11v6M544.5 11v6M590.5 11v6M635.5 11v6M680.5 11v6M726.5 11v6M771.5 11v6M816.5 11v6M862.5 11v6M907.5 11v6M953.5 11v6M998.5 11v6" stroke="#6c6c6c" stroke-width="1" fill="none"/>
<path d="M18.5 14v3M27.5 14v3M32.5 14v3M36.5 14v3M41.5 14v3M50.5 14v3M55.5 14v3M59.5 14v3M64.5 14v3M73.5 14v3M77.5 14v3M82.5 14v3M86.5 14v3M95.5 14v3M100.5 14v3M104.5 14v3M109.5 14v3M118.5 14v3M123.5 14v3M127.5 14v3M132.5 14v3M141.5 14v3M145.5 14v3M150.5 14v3M154.5 14v3M163.5 14v3M168.5 14v3M173.5 14v3M177.5 14v3M186.5 14v3M191.5 14v3M195.5 14v3M200.5 14v3M209.5 14v3M213.5 14v3M218.5 14v3M222.5 14v3M231.5 14v3M236.5 14v3M241.5 14v3M245.5 14v3M254.5 14v3M259.5 14v3M263.5 14v3M268.5 14v3M277.5 14v3M281.5 14v3M286.5 14v3M290.5 14v3M299.5 14v3M304.5 14v3M309.5 14v3M313.5 14v3M322.5 14v3M327.5 14v3M331.5 14v3M336.5 14v3M345.5 14v3M349.5 14v3M354.5 14v3M358.5 14v3M368.5 14v3M372.5 14v3M377.5 14v3M381.5 14v3M390.5 14v3M395.5 14v3M399.5 14v3M404.5 14v3M413.5 14v3M417.5 14v3M422.5 14v3M426.5 14v3M436.5 14v3M440.5 14v3M445.5 14v3M449.5 14v3M458.5 14v3M463.5 14v3M467.5 14v3M472.5 14v3M481.5 14v3M485.5 14v3M490.5 14v3M494.5 14v3M504.5 14v3M508.5 14v3M513.5 14v3M517.5 14v3M526.5 14v3M531.5 14v3M535.5 14v3M540.5 14v3M549.5 14v3M553.5 14v3M558.5 14v3M563.5 14v3M572.5 14v3M576.5 14v3M581.5 14v3M585.5 14v3M594.5 14v3M599.5 14v3M603.5 14v3M608.5 14v3M617.5 14v3M621.5 14v3M626.5 14v3M631.5 14v3M640.5 14v3M644.5 14v3M649.5 14v3M653.5 14v3M662.5 14v3M667.5 14v3M671.5 14v3M676.5 14v3M685.5 14v3M689.5 14v3M694.5 14v3M699.5 14v3M708.5 14v3M712.5 14v3M717.5 14v3M721.5 14v3M730.5 14v3M735.5 14v3M739.5 14v3M744.5 14v3M753.5 14v3M758.5 14v3M762.5 14v3M767.5 14v3M776.5 14v3M780.5 14v3M785.5 14v3M789.5 14v3M798.5 14v3M803.5 14v3M807.5 14v3M812.5 14v3M821.5 14v3M826.5 14v3M830.5 14v3M835.5 14v3M844.5 14v3M848.5 14v3M853.5 14v3M857.5 14v3M866.5 14v3M871.5 14v3M875.5 14v3M880.5 14v3M889.5 14v3M894.5 14v3M898.5 14v3M903.5 14v3M912.5 14v3M916.5 14v3M921.5 14v3M925.5 14v3M934.5 14v3M939.5 14v3M943.5 14v3M948.5 14v3M957.5 14v3M962.5 14v3M966.5 14v3M971.5 14v3M980.5 14v3M984.5 14v3M989.5 14v3M993.5 14v3M1002.5 14v3M1007.5 14v3M1011.5 14v3M1016.5 14v3M1025.5 14v3" stroke="#606060" stroke-width="1" fill="none"/>
<g font-family="Liberation Sans, sans-serif" font-size="9" fill="#747474">
<text x="26.0" y="10">100</text>
<text x="71.0" y="10">80</text>
<text x="117.0" y="10">60</text>
<text x="162.0" y="10">40</text>
<text x="207.0" y="10">20</text>
<text x="253.0" y="10">0</text>
<text x="298.0" y="10">20</text>
<text x="343.0" y="10">40</text>
<text x="389.0" y="10">60</text>
<text x="434.0" y="10">80</text>
<text x="479.0" y="10">100</text>
<text x="525.0" y="10">120</text>
<text x="570.0" y="10">140</text>
<text x="615.0" y="10">160</text>
<text x="661.0" y="10">180</text>
<text x="706.0" y="10">200</text>
<text x="751.0" y="10">220</text>
<text x="797.0" y="10">240</text>
<text x="842.0" y="10">260</text>
<text x="888.0" y="10">280</text>
<text x="933.0" y="10">300</text>
<text x="978.0" y="10">320</text>
<text x="1024.0" y="10">340</text>
</g>
<path d="M15.500 0v17M0 16.500h16" stroke="#707070"/>
<path d="M1 5.500h13M4.500 1v15" stroke="#787878" stroke-width="1" stroke-dasharray="1 1.200" fill="none"/><rect x="3" y="4" width="3" height="3" fill="#2c2c2c" stroke="#787878" stroke-width=".8"/>
</svg>
<svg style="left:56px;top:118px;overflow:hidden;" width="16" height="582" id="vr">
<path d="M0 5.5h16M0 50.5h16M0 95.5h16M0 141.5h16M0 186.5h16M0 231.5h16M0 277.5h16M0 322.5h16M0 367.5h16M0 413.5h16M0 458.5h16M0 503.5h16M0 549.5h16" stroke="#787878" stroke-width="1" fill="none"/>
<path d="M9 27.5h7M9 73.5h7M9 118.5h7M9 163.5h7M9 209.5h7M9 254.5h7M9 299.5h7M9 345.5h7M9 390.5h7M9 435.5h7M9 481.5h7M9 526.5h7M9 571.5h7" stroke="#6c6c6c" stroke-width="1" fill="none"/>
<path d="M13 9.5h3M13 14.5h3M13 18.5h3M13 23.5h3M13 32.5h3M13 36.5h3M13 41.5h3M13 45.5h3M13 54.5h3M13 59.5h3M13 63.5h3M13 68.5h3M13 77.5h3M13 82.5h3M13 86.5h3M13 91.5h3M13 100.5h3M13 104.5h3M13 109.5h3M13 113.5h3M13 122.5h3M13 127.5h3M13 131.5h3M13 136.5h3M13 145.5h3M13 150.5h3M13 154.5h3M13 159.5h3M13 168.5h3M13 172.5h3M13 177.5h3M13 181.5h3M13 190.5h3M13 195.5h3M13 200.5h3M13 204.5h3M13 213.5h3M13 218.5h3M13 222.5h3M13 227.5h3M13 236.5h3M13 240.5h3M13 245.5h3M13 249.5h3M13 258.5h3M13 263.5h3M13 268.5h3M13 272.5h3M13 281.5h3M13 286.5h3M13 290.5h3M13 295.5h3M13 304.5h3M13 308.5h3M13 313.5h3M13 317.5h3M13 326.5h3M13 331.5h3M13 336.5h3M13 340.5h3M13 349.5h3M13 354.5h3M13 358.5h3M13 363.5h3M13 372.5h3M13 376.5h3M13 381.5h3M13 385.5h3M13 395.5h3M13 399.5h3M13 404.5h3M13 408.5h3M13 417.5h3M13 422.5h3M13 426.5h3M13 431.5h3M13 440.5h3M13 444.5h3M13 449.5h3M13 453.5h3M13 463.5h3M13 467.5h3M13 472.5h3M13 476.5h3M13 485.5h3M13 490.5h3M13 494.5h3M13 499.5h3M13 508.5h3M13 512.5h3M13 517.5h3M13 521.5h3M13 531.5h3M13 535.5h3M13 540.5h3M13 544.5h3M13 553.5h3M13 558.5h3M13 562.5h3M13 567.5h3M13 576.5h3M13 580.5h3" stroke="#606060" stroke-width="1" fill="none"/>
<g font-family="Liberation Sans, sans-serif" font-size="8.500" fill="#747474">
<text x="2.500" y="13.5">0</text>
<text x="2.500" y="58.5">2</text>
<text x="2.500" y="66.7">0</text>
<text x="2.500" y="103.5">4</text>
<text x="2.500" y="111.7">0</text>
<text x="2.500" y="149.5">6</text>
<text x="2.500" y="157.7">0</text>
<text x="2.500" y="194.5">8</text>
<text x="2.500" y="202.7">0</text>
<text x="2.500" y="239.5">1</text>
<text x="2.500" y="247.7">0</text>
<text x="2.500" y="255.9">0</text>
<text x="2.500" y="285.5">1</text>
<text x="2.500" y="293.7">2</text>
<text x="2.500" y="301.9">0</text>
<text x="2.500" y="330.5">1</text>
<text x="2.500" y="338.7">4</text>
<text x="2.500" y="346.9">0</text>
<text x="2.500" y="375.5">1</text>
<text x="2.500" y="383.7">6</text>
<text x="2.500" y="391.9">0</text>
<text x="2.500" y="421.5">1</text>
<text x="2.500" y="429.7">8</text>
<text x="2.500" y="437.9">0</text>
<text x="2.500" y="466.5">2</text>
<text x="2.500" y="474.7">0</text>
<text x="2.500" y="482.9">0</text>
<text x="2.500" y="511.5">2</text>
<text x="2.500" y="519.7">2</text>
<text x="2.500" y="527.9">0</text>
<text x="2.500" y="557.5">2</text>
<text x="2.500" y="565.7">4</text>
<text x="2.500" y="573.9">0</text>
</g>
</svg>
<svg style="left:1088px;top:106px;" width="10" height="7"><path d="M5 0.500l4.500 6h-9z" fill="#8e8e8e"/></svg>
<svg style="left:1088px;top:688px;" width="10" height="7"><path d="M0.500 0.500h9l-4.500 6z" fill="#8e8e8e"/></svg>
<div style="left:56px;top:700px;width:16px;height:16px;background:#2c2c2c;"></div>
<svg style="left:73px;top:701px;" width="20" height="13"><rect x="0.500" y="0.500" width="19" height="12" rx="2" fill="#555" stroke="#7a7a7a"/><circle cx="6" cy="6.500" r="2.600" fill="none" stroke="#a0a0a0" stroke-width="2" stroke-dasharray="1.600 1"/><path d="M10.500 5h6M14.500 3l2.500 2-2.500 2M17 8.500h-6M13 6.500l-2.500 2 2.500 2" stroke="#b0b0b0" stroke-width="1" fill="none"/></svg>
<svg style="left:100px;top:701px;" width="15" height="13"><path d="M5.500 2.500h-4.500v9.500h10V8.500" fill="none" stroke="#a4a4a4" stroke-width="1.500"/><path d="M4.500 9.500c0-4 2.500-6 6-6V1l4 4-4 4V6.500c-2.500 0-4.500 1-6 3z" fill="#a4a4a4"/></svg>
<svg style="left:123px;top:703px;" width="32" height="10" fill="#9c9c9c"><rect x="0" y="0" width="1.600" height="10"/><path d="M8 0v10L2 5z"/><path d="M21 0v10l-6-5z"/></svg>
<span class="t" style="left:153px;top:703px;font-size:9.500px;line-height:10px;color:#8c8c8c;">1</span>
<svg style="left:234px;top:705px;" width="9" height="7"><path d="M0.500 0.500h8l-4 6z" fill="#8c8c8c"/></svg>
<svg style="left:254px;top:703px;" width="22" height="10" fill="#9c9c9c"><path d="M0.500 0v10l6-5z"/><path d="M12.500 0v10l6-5z"/><rect x="19.500" y="0" width="1.600" height="10"/></svg>
<svg style="left:282px;top:700px;" width="17" height="16"><circle cx="7.500" cy="8" r="7" fill="#555" stroke="#8a8a8a"/><path d="M4.500 4h4l2.500 2.500V12h-6.500z" fill="none" stroke="#c4c4c4" stroke-width="1.300"/><path d="M8 4v3h3" fill="none" stroke="#c4c4c4" stroke-width="1"/><path d="M13.500 13h3.500l-1.750 2.200z" fill="#b0b0b0"/></svg>
<span class="t" id="stprof" style="transform:scaleX(0.8785);left:307px;top:702.500px;font-size:10.500px;line-height:11px;color:#8a8a8a;">[Grundprofil] (Arbeits…</span>
<svg style="left:412px;top:705px;" width="9" height="7"><path d="M0.500 0.500h8l-4 6z" fill="#8c8c8c"/></svg>
<div style="left:427px;top:703px;width:11px;height:11px;border-radius:6px;background:#66aa40;"></div>
<span class="t" id="stok" style="transform:scaleX(0.8621);left:441px;top:702.500px;font-size:10.500px;line-height:11px;color:#c2c2c2;">Ohne Fehler</span>
<svg style="left:511px;top:706px;" width="8" height="5"><path d="M0.500 0.500h6.500l-3.250 4z" fill="#bdbdbd"/></svg>
<div style="left:525px;top:700px;width:540px;height:16px;background:#3b3b3b;"></div>
<svg style="left:529px;top:703px;" width="8" height="10"><path d="M7 0.500v9l-6.500-4.500z" fill="#9a9a9a"/></svg>
<svg style="left:1052px;top:703px;" width="8" height="10"><path d="M0.500 0.500v9l6.500-4.500z" fill="#8a8a8a"/></svg>
<div style="left:1064px;top:700px;width:36px;height:16px;background:#4a4a4a;"></div>
<div style="left:1068px;top:702px;width:15px;height:12px;border:1px solid #d0d0d0;background:#333;"></div><div style="left:1075px;top:702px;width:1px;height:12px;background:#d0d0d0;"></div>
<svg style="left:1088px;top:704px;" width="11" height="11" fill="#bdbdbd"><rect x="9" y="0" width="1.500" height="1.500"/><rect x="6.500" y="2.500" width="1.500" height="1.500"/><rect x="9" y="2.500" width="1.500" height="1.500"/><rect x="4" y="5" width="1.500" height="1.500"/><rect x="6.500" y="5" width="1.500" height="1.500"/><rect x="9" y="5" width="1.500" height="1.500"/><rect x="1.500" y="7.500" width="1.500" height="1.500"/><rect x="4" y="7.500" width="1.500" height="1.500"/><rect x="6.500" y="7.500" width="1.500" height="1.500"/><rect x="9" y="7.500" width="1.500" height="1.500"/></svg>
</div>
<svg id="art" style="left:72px;top:118px;overflow:hidden;" width="1013" height="582" viewBox="72 118 1013 582" font-family="Liberation Sans, sans-serif">
<!-- page guides halo -->
<path d="M305.500 695.500V123.500H851" fill="none" stroke="#f7d8f7" stroke-width="3"/>
<path d="M305.500 694.500H850" fill="none" stroke="#f3c9f3" stroke-width="2.500"/>
<path d="M849.700 124V695" fill="none" stroke="#ead6f4" stroke-width="1.200"/>
<!-- blue areas -->
<g fill="#0b9adf">
<rect x="310.800" y="197.200" width="29.300" height="421.300"/>
<path d="M729.700 127.400H549C538 127.400 535 132 532.500 139.700L530.800 145.300H729.700z"/>
<path d="M730 672H531.200C533 677 536 684 540 687C543 689.500 546 690 549 690H730z"/>
</g>
<path d="M339.200 197.200V618.500" fill="none" stroke="#8a80b2" stroke-width="1"/><path d="M340.300 197V618.700" fill="none" stroke="#43324c" stroke-width="1"/><path d="M310.800 197.200H340.200M310.800 618.500H340.200" fill="none" stroke="#6a3c58" stroke-width=".8"/>
<!-- gray guide lines -->
<path d="M685.500 127.500V690M718.500 127.500V690M310.800 590.500H845.500M310.800 608.500H845.500" fill="none" stroke="#979797" stroke-width="1"/>
<!-- thin dimension lines -->
<g fill="none" stroke-width=".9">
<path d="M330.500 166.700V197.200M330.700 618.500V650.500M730 673.500H768" stroke="#c2c2c2"/>
<path d="M582.500 158.800V203.800M525.600 227.200H559.300M729.700 144.400H767.600M310.800 576.700H340" stroke="#a89a9a"/>
<path d="M427.500 166.300V180" stroke="#de7d88"/>
<path d="M340 292.500H364" stroke="#8aa2b8"/>
</g>
<!-- die outline -->
<g fill="none" stroke="#ae1e20" stroke-width="1" stroke-linejoin="round">
<path id="outer" d="M305.500 174C305.500 167 311 162.900 318.500 162.700L470 160.600L500 159.700C516 159 520 156 524 148C530 134 532 124.500 545 124.500H757C765 124.500 769 132 772 140C775 149 777 154.500 783 157L841.700 178.300C846 180 851.200 182.500 851.200 190V628C851.200 634 848 636.500 843 638.300L782.700 660.300C778 662 777 666 775 672C772 683 768 693.500 755 693.500H549C536 693.500 532 685 528.500 677C525 667 522 661.500 512 659.600L499.500 657.800L316.700 654.300C310 654 305.500 650 305.500 643z"/>
<path id="inner" d="M310.800 178C310.800 171 315 167 321.700 166.700L470 164.300L505 163.400C515 163 522 162 525.500 158.800C528 155 530 147 532.500 139.700C535 132 538 127.200 549 127.200H750C758 127.200 763 131 767 138C771 146 773 153 775.500 158.800C777 160 778 160.500 780 161.200L838.300 182.700C843 184.500 845.700 187 845.700 193V626C845.700 631 843.500 633.500 839.200 635L784.600 655.400C780 657 778 657.500 775.900 658.300C774 661 773 664 771 670C767 682 763 690 750 690H549C540 690 536 684 533 677C530 669 528.500 663 525.800 658.300C523 656 519 655.200 512 654.600L480 653.500L320 650.700C314 650.500 310.800 646 310.800 640z"/>
<path d="M525.500 158.500V658.500M775.500 158.500V658.500M525.500 158.500H775.500M525.500 658.500H775.500"/>
<rect x="559.300" y="204.200" width="102.100" height="205.400" rx="9" ry="9"/>
<rect x="562.900" y="208.300" width="94.900" height="197.300" rx="6" ry="6"/>
</g>
<path d="M310.600 197.500V618.300" stroke="#1b4c74" stroke-width="1.100" fill="none"/>
<!-- page shadow/border -->
<path d="M851.500 123.500V696M305 695.700H852" fill="none" stroke="#120818" stroke-width="1.400"/>
<path d="M305.500 123.500H851" fill="none" stroke="#d088da" stroke-width="1"/>
<path d="M305.500 694.600H851" fill="none" stroke="#8c2f9c" stroke-width="1"/>
<path d="M305.500 123.500V695.500" fill="none" stroke="#8663a8" stroke-width="1"/>
<path d="M849.900 254V507" fill="none" stroke="#99246f" stroke-width="1.800"/>
<!-- arrow heads -->
<g fill="#d0182a">
<path d="M424.500 179h6l-3 4z"/>
<path d="M328.700 169.500l1.800-3 1.800 3zM328.700 194.500l1.800 3 1.800-3z"/>
<path d="M328.900 621.500l1.800-3 1.800 3zM328.900 647.500l1.800 3 1.800-3z"/>
<path d="M580.700 162l1.800-3.200 1.800 3.200zM580.700 200.600l1.800 3.200 1.800-3.200z"/>
<path d="M529 225.400l-3.400 1.800 3.400 1.800zM556 225.400l3.300 1.800-3.300 1.800z"/>
<path d="M733 142.600l-3.300 1.800 3.300 1.800zM764.300 142.600l3.300 1.800-3.300 1.800z"/>
<path d="M733.300 671.700l-3.300 1.800 3.300 1.800zM764.700 671.700l3.300 1.800-3.300 1.800z"/>
<path d="M314 575l-3.200 1.700 3.200 1.700zM337 575l3.200 1.700-3.200 1.700z"/>
<path d="M314 588.500l-3.200 1.700 3.200 1.700zM842.300 588.500l3.200 1.700-3.200 1.700z"/>
<path d="M314 606.600l-3.200 1.700 3.200 1.700zM522.400 606.600l3.200 1.700-3.200 1.700zM528.800 606.600l-3.200 1.700 3.200 1.700zM772.700 606.600l3.200 1.700-3.200 1.700zM779.100 606.600l-3.200 1.700 3.200 1.700zM842.300 606.600l3.200 1.700-3.200 1.700z"/>
<path d="M683.600 130.500l1.700-3 1.700 3zM683.600 155.800l1.700 3 1.700-3zM683.600 162l1.700-3 1.700 3z"/>
<path d="M701.600 130.500l1.700-3 1.700 3zM701.600 142.300l1.700 3 1.700-3zM716.900 130.500l1.700-3 1.700 3z"/>
<path d="M683.600 655.300l1.700 3 1.700-3zM683.600 661.300l1.700-3 1.700 3zM683.600 687l1.700 3 1.700-3z"/>
<path d="M701.600 675l1.700-3 1.700 3zM701.600 687l1.700 3 1.700-3zM716.900 687l1.700 3 1.700-3z"/>
</g>
<path d="M703.300 128V145M703.300 672V690" stroke="#b9242b" stroke-width=".8"/>
<path d="M363 289l8 3.500-8 3.500z" fill="#4f8fcf" stroke="#c82838" stroke-width="1"/>
<!-- texts -->
<g fill="#d2101f" font-weight="bold" stroke="#d2101f" stroke-width=".35" paint-order="stroke">
<text x="363" y="193.800" font-size="9.200" textLength="91.700" lengthAdjust="spacingAndGlyphs">Bitte an allen Seiten 2 mm</text>
<text x="363" y="204.100" font-size="9.200" textLength="82.800" lengthAdjust="spacingAndGlyphs">Beschnittrand zugeben!</text>
<text x="363" y="214.400" font-size="9.200" textLength="66" lengthAdjust="spacingAndGlyphs">(Gestrichelte Linie)</text>
<text transform="translate(385.800 397) rotate(-90)" font-size="12.600" font-weight="normal" stroke="#d2101f" stroke-width=".65" textLength="139.500" lengthAdjust="spacingAndGlyphs">Nicht bedruckbarer Bereich.</text>
<text transform="translate(638.900 218.400) rotate(90)" font-size="13" font-weight="normal" stroke="#d2101f" stroke-width=".7" textLength="94.800" lengthAdjust="spacingAndGlyphs">Fenster: 90 x 45 mm</text>
<text transform="translate(738.900 187.800) rotate(90)" font-size="15" fill="#cc0c38" stroke="#cc0c38" stroke-width=".7" textLength="97" lengthAdjust="spacingAndGlyphs">VORDERSEITE</text>
<text transform="translate(373.700 576) rotate(-90)" font-size="15" fill="#cc0c38" stroke="#cc0c38" stroke-width=".7" textLength="76.700" lengthAdjust="spacingAndGlyphs">RÜCKSEITE</text>
<text transform="translate(437.700 576.700) rotate(-90)" font-size="11.700" textLength="59.400" lengthAdjust="spacingAndGlyphs">ACHTUNG:</text>
<g font-size="7.600" stroke-width=".55">
<text transform="translate(447.800 576) rotate(-90)" textLength="102" lengthAdjust="spacingAndGlyphs">Diese Grafik aus der Druckdatei</text>
<text transform="translate(457.900 576) rotate(-90)" textLength="98" lengthAdjust="spacingAndGlyphs">entfernen! Bitte verschicken</text>
<text transform="translate(468 576) rotate(-90)" textLength="100.500" lengthAdjust="spacingAndGlyphs">Sie uns den Stand der Stanz-</text>
<text transform="translate(478.100 576) rotate(-90)" textLength="103" lengthAdjust="spacingAndGlyphs">kontur während einer zweiten</text>
<text transform="translate(488.300 576) rotate(-90)" textLength="69.500" lengthAdjust="spacingAndGlyphs">Datei (Ansichtsdatei).</text>
</g>
<g font-size="8.200">
<text x="737.400" y="143.500" textLength="22" lengthAdjust="spacingAndGlyphs">20 mm</text>
<text x="737" y="681.700" textLength="23.300" lengthAdjust="spacingAndGlyphs">20 mm</text>
<text x="564" y="598.200" textLength="27" lengthAdjust="spacingAndGlyphs">236 mm</text>
<text x="406" y="616.200" textLength="22.300" lengthAdjust="spacingAndGlyphs">59 mm</text>
<text x="636.700" y="616.400" textLength="26.300" lengthAdjust="spacingAndGlyphs">110 mm</text>
<text x="798.300" y="616.200" textLength="22.900" lengthAdjust="spacingAndGlyphs">31 mm</text>
<text x="315" y="584.200" textLength="21" lengthAdjust="spacingAndGlyphs">13 mm</text>
<text x="534" y="234.800" font-size="7" textLength="17" lengthAdjust="spacingAndGlyphs">15 mm</text>
<text transform="translate(577.300 173.800) rotate(90)" font-size="7.400" textLength="19.200" lengthAdjust="spacingAndGlyphs">20 mm</text>
<text transform="translate(323 172) rotate(90)" font-size="7" textLength="17.700" lengthAdjust="spacingAndGlyphs">17 mm</text>
<text transform="translate(322.500 625) rotate(90)" font-size="7" textLength="17.700" lengthAdjust="spacingAndGlyphs">17 mm</text>
<text transform="translate(678.300 397.400) rotate(90)" font-size="7.400" textLength="21.500" lengthAdjust="spacingAndGlyphs">220 mm</text>
<text transform="translate(710.800 399) rotate(90)" font-size="7.400" textLength="25" lengthAdjust="spacingAndGlyphs">244 mm</text>
<text transform="translate(678 134.400) rotate(90)" font-size="7" textLength="17.200" lengthAdjust="spacingAndGlyphs">14 mm</text>
<text transform="translate(697.300 128.500) rotate(90)" font-size="7" textLength="15.500" lengthAdjust="spacingAndGlyphs">6 mm</text>
<text transform="translate(677.700 665) rotate(90)" font-size="7" textLength="16.700" lengthAdjust="spacingAndGlyphs">14 mm</text>
<text transform="translate(696.800 673) rotate(90)" font-size="7" textLength="14.500" lengthAdjust="spacingAndGlyphs">6 mm</text>
</g>
</g>
<!-- orange pixel cursor icon -->
<g fill="#ecc074">
<rect x="185.500" y="663.700" width="2.600" height="2.600"/><rect x="192.500" y="663.700" width="2.600" height="2.600" fill="#f0cf90"/>
<rect x="185.500" y="667" width="2.600" height="2.600"/><rect x="189" y="667" width="2.600" height="2.600"/>
<rect x="178.500" y="670.500" width="2.600" height="2.600" fill="#f3d9a6"/><rect x="182" y="670.500" width="2.600" height="2.600"/><rect x="185.500" y="670.500" width="2.600" height="2.600"/><rect x="189" y="670.500" width="2.600" height="2.600"/><rect x="192.500" y="670.500" width="2.600" height="2.600"/>
<rect x="182" y="674" width="2.600" height="2.600"/><rect x="185.500" y="674" width="2.600" height="2.600"/><rect x="189" y="674" width="2.600" height="2.600"/><rect x="192.500" y="674" width="2.600" height="2.600"/>
<rect x="182" y="677.500" width="2.600" height="2.600"/><rect x="185.500" y="677.500" width="2.600" height="2.600"/><rect x="189" y="677.500" width="2.600" height="2.600"/><rect x="192.500" y="677.500" width="2.600" height="2.600"/>
</g>
</svg>
<!-- watermark swoosh over ruler -->
<svg id="wm" style="left:44px;top:590px;" width="28" height="70" viewBox="44 590 28 70"><g fill="#b6b6b6" opacity=".72"><path d="M72 595.500C62 591.500 52 595 51 604C50.300 612 55 625 63 638.500L65.800 637C60 628 57.500 619 57.500 611C57.500 604 62 600.500 72 602.500Z"/><path d="M63.500 636.500C58 640 54.500 644 55.500 648.500C57 654 65 654.500 72 653V650C66 651.500 60.500 651 59.500 647.500C59 644 62 641.500 66 640L72 639.500V637.500L66 637.500Z"/></g></svg>
<span class="t" style="left:59px;top:672px;font-size:10px;font-weight:bold;color:#d0d0d0;line-height:10px;">n</span>
<div class="abs" id="pn" style="left:1103px;top:0;width:171px;height:719px;">
<svg style="left:160px;top:85px;" width="9" height="7"><path d="M4 0v7L0 3.500zM8.500 0v7L4.500 3.500z" fill="#d4d4d4"/></svg>
<div class="grp" style="top:93px;height:97px;"></div>
<div class="grip" style="top:97px;"></div>
<svg style="left:10px;top:109.0px;" width="19" height="17"><path d="M0.500 4.500L4 1h4.500v12.500h-8zM18.500 4.500L15 1h-4.500v12.500h8z" fill="#cdcdcd"/><path d="M0.500 4.500H4V1M18.500 4.500H15V1" fill="none" stroke="#8a8a8a" stroke-width=".8"/><path d="M9.500 0v17" stroke="#f0f0f0" stroke-width="1"/></svg>
<span class="prow" id="pr1" style="transform:scaleX(0.9062);top:111.0px;">Seiten</span>
<svg style="left:10px;top:136.5px;" width="19" height="18"><path d="M0.500 11l9 5.500 9-5.500-2.800-1.700-6.200 3.700-6.200-3.700z" fill="#cdcdcd"/><path d="M9.500 0.500l9 5-9 5.300-9-5.300z" fill="#ececec"/></svg>
<span class="prow" id="pr2" style="transform:scaleX(0.8684);top:139.0px;">Ebenen</span>
<svg style="left:10px;top:168.0px;" width="19" height="11" fill="none" stroke="#d8d8d8" stroke-width="2.300"><path d="M7.500 1.500H5.500a4 4 0 0 0 0 8h2M11.500 1.500h2a4 4 0 0 1 0 8h-2M6 5.500h7"/></svg>
<span class="prow" id="pr3" style="transform:scaleX(0.9566);top:167.0px;">Verknüpfungen</span>
<div class="grp" style="top:190px;height:97px;"></div>
<div class="grip" style="top:194px;"></div>
<svg style="left:10px;top:208.0px;" width="18" height="13"><path d="M0 0.500h18" stroke="#d8d8d8" stroke-width="1"/><path d="M0 4.500h18" stroke="#d8d8d8" stroke-width="2"/><path d="M0 10h18" stroke="#d8d8d8" stroke-width="3.400"/></svg>
<span class="prow" id="pr4" style="transform:scaleX(0.9500);top:208.0px;">Kontur</span>
<svg style="left:9px;top:234.5px;" width="21" height="16"><path d="M10.500 1c6 0 10 2.500 10 7 0 4-4 7-10 7s-10-2.500-10-6c0-2 1.500-3 3-3s2.500-1 2.500-2.500S7.500 1 10.500 1z" fill="#c8c8c8"/><g fill="#4b4b4a"><circle cx="11" cy="4.500" r="1.500"/><circle cx="15.500" cy="6.500" r="1.500"/><circle cx="15" cy="11" r="1.500"/><circle cx="9.500" cy="12" r="1.500"/><circle cx="4.500" cy="10.500" r="1.400"/></g></svg>
<span class="prow" id="pr5" style="transform:scaleX(0.8448);top:236.0px;">Farbe</span>
<svg style="left:10px;top:264.5px;" width="17" height="12"><rect x="0.500" y="0.500" width="16" height="11" fill="#8c8c8c" stroke="#d8d8d8"/><path d="M0.500 6h16M6 0.500v11M11.500 0.500v11" stroke="#d8d8d8" stroke-width="1"/><rect x="1" y="1" width="4.500" height="4.500" fill="#2a2a2a"/><rect x="6.500" y="1" width="4.500" height="4.500" fill="#555"/><rect x="12" y="6.500" width="4" height="4.500" fill="#6a6a6a"/></svg>
<span class="prow" id="pr6" style="transform:scaleX(0.9059);top:264.0px;">Farbfelder</span>
<div class="grp" style="top:287px;height:97px;"></div>
<div class="grip" style="top:291px;"></div>
<svg style="left:10px;top:302.0px;" width="19" height="19"><path d="M11 1.200h7.500M16.300 1v12.500M13 1v12.500" stroke="#d8d8d8" stroke-width="1.900" fill="none"/><path d="M13 1a3.800 3.800 0 0 0 0 7.600z" fill="#d8d8d8" stroke="#d8d8d8" stroke-width="1.200"/><rect x="0.800" y="9.800" width="5.200" height="5.200" fill="#4b4b4a" stroke="#d0d0d0" stroke-width="1.200"/><rect x="3.300" y="12.300" width="5.200" height="5.200" fill="#4b4b4a" stroke="#d0d0d0" stroke-width="1.200"/></svg>
<span class="prow" id="pr7" style="transform:scaleX(0.9384);top:305.0px;">Absatzformate</span>
<svg style="left:10px;top:330.0px;" width="19" height="19"><path d="M9.500 11.500L13.700 1.500 18 11.500M11 8h5.400" stroke="#d8d8d8" stroke-width="2.100" fill="none"/><rect x="0.800" y="9.800" width="5.200" height="5.200" fill="#4b4b4a" stroke="#d0d0d0" stroke-width="1.200"/><rect x="3.300" y="12.300" width="5.200" height="5.200" fill="#4b4b4a" stroke="#d0d0d0" stroke-width="1.200"/></svg>
<span class="prow" id="pr8" style="transform:scaleX(0.9423);top:333.0px;">Zeichenformate</span>
<svg style="left:10px;top:358.0px;" width="19" height="19"><rect x="6.500" y="1.500" width="11" height="11" fill="#9c9c9c"/><g fill="#dcdcdc"><rect x="5" y="0" width="3.500" height="3.500"/><rect x="15.500" y="0" width="3.500" height="3.500"/><rect x="15.500" y="10.500" width="3.500" height="3.500"/></g><rect x="0.800" y="9.800" width="5.200" height="5.200" fill="#4b4b4a" stroke="#d0d0d0" stroke-width="1.200"/><rect x="3.300" y="12.300" width="5.200" height="5.200" fill="#4b4b4a" stroke="#d0d0d0" stroke-width="1.200"/></svg>
<span class="prow" id="pr9" style="transform:scaleX(0.9789);top:361.0px;">Objektformate</span>
<div class="grp" style="top:384px;height:41px;"></div>
<div class="grip" style="top:388px;"></div>
<svg style="left:9px;top:398.0px;" width="21" height="21"><circle cx="7.500" cy="7.500" r="6.500" fill="#c0c0c0"/><path d="M3 4c2 0 3 1.500 2 3s1 2 2.500 2 1.500 2 .5 3.500M8 1.500c1 1.500 3 1 4 2.500" stroke="#4b4b4a" stroke-width="1.300" fill="none"/><path d="M9.500 8.500v8l-1.800-1.500-.9.900 3.700 4.600h6.500l1.500-5.500c0-1.500-1-2-2-2l-4.500-.8V8.500c0-1.600-2.500-1.600-2.500 0z" fill="#ededed" stroke="#4b4b4a" stroke-width=".9"/></svg>
<span class="prow" id="pr10" style="transform:scaleX(0.9167);top:402.0px;">Hyperlinks</span>
<div class="grp" style="top:425px;height:69px;"></div>
<div class="grip" style="top:429px;"></div>
<svg style="left:12px;top:442.0px;" width="16" height="15"><path d="M1 0v15" stroke="#d8d8d8" stroke-width="1.500"/><rect x="3" y="1.500" width="8" height="4.500" fill="#d0d0d0"/><rect x="3" y="9" width="13" height="4.500" fill="#d0d0d0"/></svg>
<span class="prow" id="pr11" style="transform:scaleX(0.9091);top:443.0px;">Ausrichten</span>
<svg style="left:12px;top:469.5px;" width="16" height="16"><rect x="0.500" y="0.500" width="9.500" height="9.500" fill="#cfcfcf"/><rect x="5.600" y="5.600" width="10" height="10" fill="#cfcfcf" stroke="#4b4b4a" stroke-width="1.300"/></svg>
<span class="prow" id="pr12" style="transform:scaleX(0.9327);top:471.0px;">Pathfinder</span>
<div class="grp" style="top:494px;height:41px;"></div>
<div class="grip" style="top:498px;"></div>
<span class="t" style="left:13px;top:510.0px;font-family:'Liberation Serif',serif;font-style:italic;font-size:17px;line-height:17px;color:#d6d6d6;">fx</span>
<span class="prow" id="pr13" style="transform:scaleX(0.9429);top:512.0px;">Effekte</span>
<div class="grp" style="top:535px;height:41px;"></div>
<div class="grip" style="top:539px;"></div>
<svg style="left:11px;top:551.5px;" width="18" height="15"><path d="M0 0.500h18M0 3.500h18M0 6.500h18M0 9.500h18M0 12.500h18M0 15h18" stroke="#d4d4d4" stroke-width="1"/><rect x="4" y="2" width="10" height="11.500" fill="#4b4b4a"/><circle cx="9" cy="7.700" r="3.500" fill="#d8d8d8"/></svg>
<span class="prow" id="pr14" style="transform:scaleX(0.9344);top:553.0px;">Textumfluss</span>
<div class="grp" style="top:576px;height:69px;"></div>
<div class="grip" style="top:580px;"></div>
<svg style="left:10px;top:592.0px;" width="20" height="17"><rect x="0.500" y="1" width="3" height="15.500" fill="#c0c0c0"/><rect x="4.500" y="1" width="4" height="15.500" fill="#d4d4d4"/><path d="M5.500 3.500h2M5.500 5.500h2" stroke="#4b4b4a" stroke-width=".9"/><path d="M10 2l3.500-1.200 6 15-3.500 1.200z" fill="#c8c8c8"/><path d="M9.500 6v10.500h3" fill="none" stroke="#c0c0c0" stroke-width="1.500"/></svg>
<span class="prow" id="pr15" style="transform:scaleX(0.9394);top:594.0px;">Commag-Bibliothek</span>
<svg style="left:10px;top:620.0px;" width="20" height="17"><rect x="0.500" y="1" width="3" height="15.500" fill="#c0c0c0"/><rect x="4.500" y="1" width="4" height="15.500" fill="#d4d4d4"/><path d="M5.500 3.500h2M5.500 5.500h2" stroke="#4b4b4a" stroke-width=".9"/><path d="M10 2l3.500-1.200 6 15-3.500 1.200z" fill="#c8c8c8"/><path d="M9.500 6v10.500h3" fill="none" stroke="#c0c0c0" stroke-width="1.500"/></svg>
<span class="prow" id="pr16" style="transform:scaleX(0.9640);top:622.0px;">4eck-Media-Bibliothek</span>
<div class="grp" style="top:645px;height:41px;"></div>
<div class="grip" style="top:649px;"></div>
<svg style="left:9px;top:661.5px;" width="22" height="16"><path d="M6.500 15a5.500 5.500 0 0 1-1-10.900A6.500 6.500 0 0 1 17 5a5 5 0 0 1-.5 10z" fill="#8a8a8a" stroke="#cfcfcf" stroke-width="1.200"/><path d="M8 11.500a3 3 0 0 1 0-6c1.500 0 2.500 1 4 3s2 3 3.500 3a2.500 2.500 0 0 0 0-5" fill="none" stroke="#e4e4e4" stroke-width="1.400"/></svg>
<span class="prow" id="pr17" style="transform:scaleX(0.9146);top:663.0px;">CC-Bibliotheken</span>
<div class="grp" style="top:686px;height:29px;"></div>
</div>
</body>
</html>
